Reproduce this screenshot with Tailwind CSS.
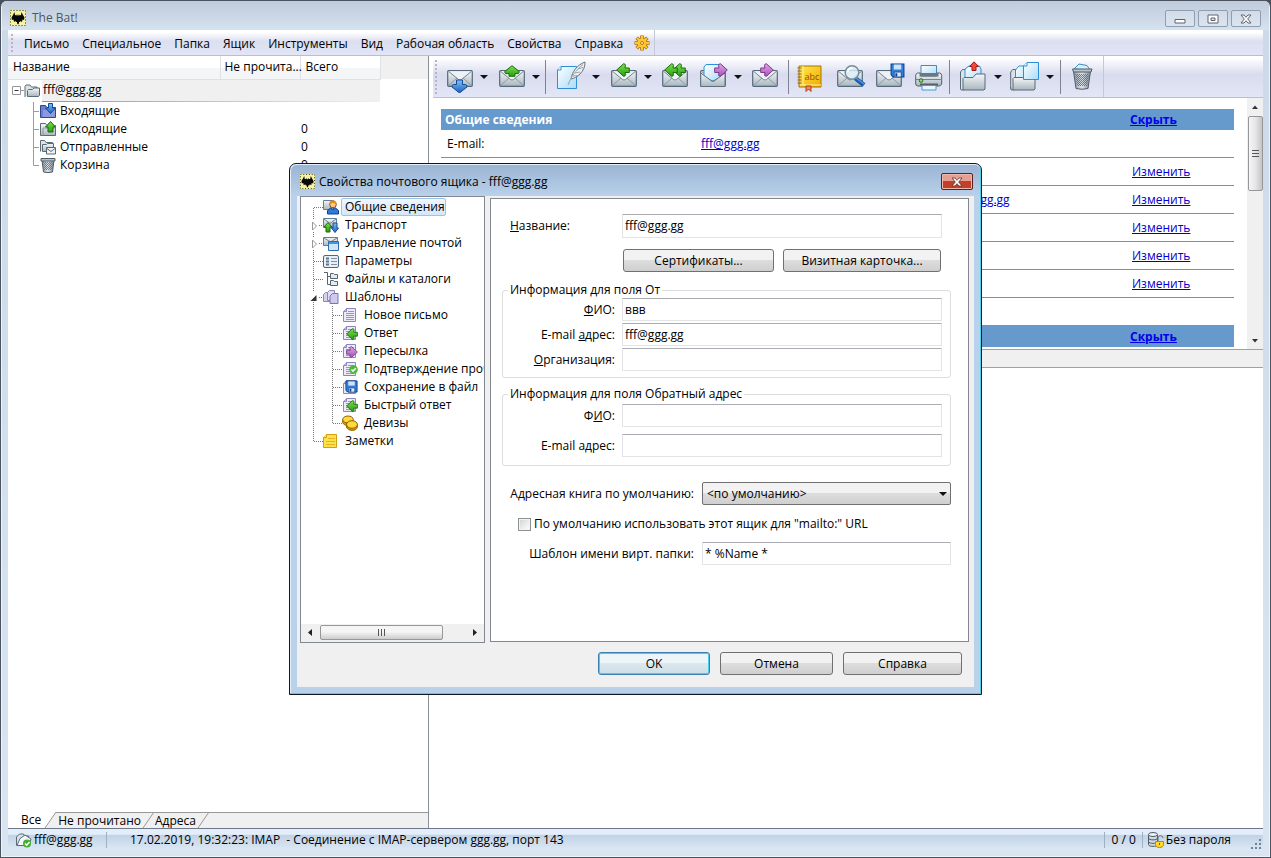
<!DOCTYPE html>
<html lang="ru">
<head>
  <meta charset="UTF-8">
  <meta name="viewport" content="width=device-width, initial-scale=1.0">
  <title>The Bat!</title>
  <script src="https://cdn.jsdelivr.net/npm/@tailwindcss/browser@4"></script>
</head>
<body class="font-['Open_Sans','Noto_Sans',sans-serif] text-[12px] leading-4 text-black bg-[#4a4f5a] overflow-hidden">

  <!-- shared icon shapes -->
  <svg width="0" height="0" class="absolute" aria-hidden="true">
    <defs>
      <linearGradient id="gEnv" x1="0" y1="0" x2="0" y2="1"><stop offset="0" stop-color="#f4f7f8"/><stop offset="1" stop-color="#a9b6bf"/></linearGradient>
      <linearGradient id="gGreen" x1="0" y1="0" x2="0" y2="1"><stop offset="0" stop-color="#7be04a"/><stop offset="1" stop-color="#2a9c14"/></linearGradient>
      <linearGradient id="gBlue" x1="0" y1="0" x2="0" y2="1"><stop offset="0" stop-color="#7fc0f5"/><stop offset="1" stop-color="#1a5fc4"/></linearGradient>
      <linearGradient id="gPink" x1="0" y1="0" x2="0" y2="1"><stop offset="0" stop-color="#e2a4ea"/><stop offset="1" stop-color="#a455b4"/></linearGradient>
      <linearGradient id="gPage" x1="0" y1="0" x2="1" y2="1"><stop offset="0" stop-color="#ffffff"/><stop offset="1" stop-color="#a8dcfa"/></linearGradient>
      <linearGradient id="gBin" x1="0" y1="0" x2="1" y2="0"><stop offset="0" stop-color="#8f9aa5"/><stop offset=".5" stop-color="#dfe5ea"/><stop offset="1" stop-color="#7b8792"/></linearGradient>
      <linearGradient id="gBook" x1="0" y1="0" x2="1" y2="1"><stop offset="0" stop-color="#ffe84a"/><stop offset="1" stop-color="#f2a900"/></linearGradient>
      <pattern id="mesh" width="2" height="2" patternUnits="userSpaceOnUse"><path d="M0 0h1v1h-1zM1 1h1v1h-1z" fill="#5d6a76"/></pattern>
      <symbol id="bat" viewBox="0 0 16 16">
        <path d="M0 0h16v16H0z" fill="#f6f3a0"/>
        <path d="M.5.5h15v15H.5z" fill="none" stroke="#222" stroke-dasharray="1 2"/>
        <path d="M4.500 2 3 5 1.500 7.500 2 10l1.500-.5L4 12l1.500-1 .8 1.500L8 14.500l1.700-2 .8-1.500 1.500 1 .5-2.500 1.500.5.5-2.500L13 5l-1.500-3-.5 3-1.500.5L9 4l-.5 1.500h-1L7 4l-.5 1.500L5 5z" fill="#080808"/>
        <path d="M6 12h1v2H6zM9 12h1v2H9z" fill="#f6f3a0"/>
      </symbol>
      <symbol id="envelope" viewBox="0 0 26 17">
        <rect x=".7" y=".7" width="24.600" height="15.600" rx="1" fill="url(#gEnv)" stroke="#54697a" stroke-width="1.200"/>
        <path d="M1.500 15.500 10 8M24.500 15.500 16 8" stroke="#8b99a3" fill="none"/>
        <path d="M1.500 1.300 11.500 9.500q1.500 1 3 0L24.500 1.300" fill="#eef2f4" stroke="#74838e"/>
      </symbol>
      <symbol id="up" viewBox="0 0 16 12"><path d="M8 .7 15.300 6.500q.2 1.500-1.300 2.200L11 8.500v2.800H5V8.500L2 8.700Q.5 8 .7 6.500z" fill="url(#gGreen)" stroke="#1d6b12"/></symbol>
      <symbol id="left" viewBox="0 0 14 14"><path d="M.7 7 7.500.8q1.700-.2 2 1.500L9 5h4.300v4.500H9l.5 2.300q-.3 1.700-2 1.500z" fill="url(#gGreen)" stroke="#1d6b12"/></symbol>
      <symbol id="right" viewBox="0 0 14 14"><path d="M13.300 7 6.500.8q-1.700-.2-2 1.500L5 5H.7v4.500H5l-.5 2.300q.3 1.700 2 1.500z" fill="url(#gPink)" stroke="#7c3b8c"/></symbol>
      <symbol id="floppy" viewBox="0 0 14 14">
        <path d="M1 1h12v12H3L1 11z" fill="#2f7fdc" stroke="#0d3f8e"/>
        <path d="M3.500 1.500h7V6h-7z" fill="#cfe4fa"/><path d="M4 8.500h6.500V13H4z" fill="#dce9f7" stroke="#0d3f8e" stroke-width=".7"/><path d="M5 9.500h1.800v3H5z" fill="#0d3f8e"/>
      </symbol>
      <symbol id="folder" viewBox="0 0 16 16">
        <path d="M1 14V3.500L2 2h4l1.500 2H13v2" fill="#dbe3e8" stroke="#5a6b78"/>
        <path d="M3.500 13.500V7.500l1-1h4L10 5h5.500v7.500l-1 1z" fill="url(#gEnv)" stroke="#5a6b78"/>
      </symbol>
      <symbol id="doc" viewBox="0 0 16 16">
        <path d="M4.500 1.500h9v13h-12v-10z" fill="#eceaf9" stroke="#8c86bd"/>
        <path d="M4.500 1.500v3h-3" fill="#c9c5e8" stroke="#8c86bd"/>
        <path d="M6 4.500h6M4 6.500h8M4 8.500h8M4 10.500h8M4 12.500h8" stroke="#9a94cb"/>
      </symbol>
      <symbol id="trash" viewBox="0 0 16 16">
        <path d="M2 3h12l-1.500 12q-4.500 1.200-9 0z" fill="url(#gBin)" stroke="#4f5d69"/>
        <path d="M3 5h10l-1 8H4z" fill="url(#mesh)" opacity=".8"/>
        <path d="M1 1.500h14V4H1z" fill="#b4bfc8" stroke="#4f5d69"/>
      </symbol>
      <symbol id="tee" viewBox="0 0 14 18"><path d="M4.500 0v18M5 9.500h9" stroke="#777" stroke-dasharray="1 1" fill="none"/></symbol>
      <symbol id="tee-first" viewBox="0 0 14 18"><path d="M4.500 10v8M5 9.500h9" stroke="#777" stroke-dasharray="1 1" fill="none"/></symbol>
      <symbol id="ell" viewBox="0 0 14 18"><path d="M4.500 0v10M5 9.500h9" stroke="#777" stroke-dasharray="1 1" fill="none"/></symbol>
      <symbol id="bar" viewBox="0 0 19 18"><path d="M4.500 0v18" stroke="#777" stroke-dasharray="1 1" fill="none"/></symbol>
      <symbol id="tee-closed" viewBox="0 0 14 18"><path d="M4.500 0v4M4.500 16v2M10 9.500h4" stroke="#777" stroke-dasharray="1 1" fill="none"/><path d="M3.500 6v8L7.500 10z" fill="#fff" stroke="#999"/></symbol>
      <symbol id="tee-open" viewBox="0 0 14 18"><path d="M4.500 0v4M4.500 14v4M10 9.500h4" stroke="#777" stroke-dasharray="1 1" fill="none"/><path d="M7.500 7v6H1.500z" fill="#333"/></symbol>
      <symbol id="branch" viewBox="0 0 11 18"><path d="M4.500 0v18M5 9.500h5" stroke="#9c9c9c" fill="none"/></symbol>
      <symbol id="branch-end" viewBox="0 0 11 18"><path d="M4.500 0v9.500h5.500" stroke="#9c9c9c" fill="none"/></symbol>
      <symbol id="drop" viewBox="0 0 8 4"><path d="M0 0h8L4 4z" fill="#111"/></symbol>
    </defs>
  </svg>

  <div class="min-h-screen flex flex-col border border-[#4b5260] rounded-t-[7px] px-[7px] pb-[7px] bg-linear-to-b from-[#cbd9e9] to-[#d9e5f1] shadow-[inset_0_0_0_1px_#eef4fa] overflow-hidden">

    <!-- title bar -->
    <header class="flex h-[29px] items-center justify-between -mx-1.5 px-2 bg-linear-to-b from-[#c0cbdb] to-[#d5e2ef]">
      <div class="flex items-center gap-1.5 pt-1">
        <svg class="size-4"><use href="#bat"/></svg>
        <h1 class="text-[#4f565f]">The Bat!</h1>
      </div>
      <div class="flex gap-[3px] pt-1.5">
        <button aria-label="Свернуть" class="flex h-[17px] w-[30px] items-center justify-center rounded-[2px] border border-[#8f9dae] bg-white/20"><svg class="size-3" viewBox="0 0 12 12"><path d="M1 6.500h10v3.500H1z" fill="#fff" stroke="#5b6470"/></svg></button>
        <button aria-label="Развернуть" class="flex h-[17px] w-[30px] items-center justify-center rounded-[2px] border border-[#8f9dae] bg-white/20"><svg class="size-3" viewBox="0 0 12 12"><path d="M1 2h10v8H1z" fill="#fff" stroke="#5b6470"/><path d="M4 5h4v2.500H4z" fill="#d5e0ec" stroke="#5b6470"/></svg></button>
        <button aria-label="Закрыть" class="flex h-[17px] w-[30px] items-center justify-center rounded-[2px] border border-[#8f9dae] bg-white/20"><svg class="size-3" viewBox="0 0 12 12"><path d="M1 2h3l2 2.300L8 2h3L7.700 6 11 10H8L6 7.700 4 10H1l3.300-4z" fill="#fff" stroke="#5b6470"/></svg></button>
      </div>
    </header>

    <!-- menu bar -->
    <nav class="flex h-[26px] items-center border-b border-[#b9bfcd] bg-linear-to-b from-white from-10% via-[#dcdff0] via-45% to-[#e1e5f5] pl-[3px]">
      <span class="h-[18px] border-l-2 border-dotted border-[#b5b5c6]"></span>
      <div class="flex gap-[13px] pl-[11px] pt-0.5">
        <a href="#">Письмо</a>
        <a href="#">Специальное</a>
        <a href="#">Папка</a>
        <a href="#">Ящик</a>
        <a href="#">Инструменты</a>
        <a href="#">Вид</a>
        <a href="#">Рабочая область</a>
        <a href="#">Свойства</a>
        <a href="#">Справка</a>
      </div>
      <button aria-label="Настройка" class="ml-[11px] flex h-full items-center border-r border-[#c3c8d8] pr-1">
        <svg class="size-4" viewBox="0 0 16 16"><g stroke="#a86c08" stroke-width="3.600"><path d="M8 .5v15M.5 8h15M2.700 2.700l10.600 10.600M13.300 2.700 2.700 13.300"/></g><g stroke="#ffc62e" stroke-width="2"><path d="M8 1v14M1 8h14M3 3l10 10M13 3 3 13"/></g><circle cx="8" cy="8" r="4.600" fill="#ffc62e"/><circle cx="8" cy="8" r="1.500" fill="#fff2b0" stroke="#b8780c"/></svg>
      </button>
    </nav>

    <main class="flex grow bg-white">
      <!-- folder tree -->
      <section class="flex w-[421px] shrink-0 flex-col border-r border-[#8b9097]">
        <div class="bg-linear-to-b from-[#f0f0f0] from-[23px] to-white to-[23px]">
          <table class="w-[372px] table-fixed border-collapse text-left">
            <colgroup><col class="w-[212px]"><col class="w-[80px]"><col class="w-[80px]"></colgroup>
            <thead>
              <tr class="h-[23px] bg-linear-to-b from-white from-50% to-[#f4f5f7] to-50%">
                <th class="border-r border-b border-[#dfe1e5] p-0 pl-[5px] font-normal">Название</th>
                <th class="whitespace-nowrap border-r border-b border-[#dfe1e5] p-0 pl-1 font-normal">Не прочита...</th>
                <th class="border-r border-b border-[#dfe1e5] p-0 pl-[5px] font-normal">Всего</th>
              </tr>
            </thead>
            <tbody>
              <tr class="h-[22px]">
                <td colspan="3" class="p-0">
                  <div class="flex h-[22px] items-center pl-1">
                    <svg class="h-[9px] w-3" viewBox="0 0 12 9"><path d="M.5.5h8v8h-8z" fill="#fff" stroke="#969696"/><path d="M2.500 4.500h4" stroke="#334"/><path d="M9 4.500h3" stroke="#999"/></svg>
                    <svg class="size-4"><use href="#folder"/></svg>
                    <div class="ml-[2px] flex h-full grow flex-col justify-between bg-[#f0f0f0]"><span class="pl-px pt-0.5">fff@ggg.gg</span><span class="h-px bg-linear-to-r from-[#5fa5d6] to-[#f0f0f0]"></span></div>
                  </div>
                </td>
              </tr>
              <tr class="h-[18px]">
                <td class="p-0"><div class="flex h-[18px] items-center gap-1 pl-[21px]"><span class="flex items-center"><svg class="h-[18px] w-[11px]"><use href="#branch"/></svg><svg class="size-4" viewBox="0 0 16 16"><path d="M.5 14.500v-12h5L7 4.500h8.500v10z" fill="#6f7fd0" stroke="#34458f"/><path d="M3 7h12v7H3z" fill="#8c9ae0"/><path d="M8.500.5h4V5H15.500l-5 5.500L5.500 5h3z" fill="url(#gBlue)" stroke="#154a95"/></svg></span>Входящие</div></td>
                <td class="p-0"></td><td class="p-0"></td>
              </tr>
              <tr class="h-[18px]">
                <td class="p-0"><div class="flex h-[18px] items-center gap-1 pl-[21px]"><span class="flex items-center"><svg class="h-[18px] w-[11px]"><use href="#branch"/></svg><svg class="size-4" viewBox="0 0 16 16"><path d="M.5 14.500v-12h5L7 4.500h8.500v10z" fill="url(#gEnv)" stroke="#5a6b78"/><path d="M3 14.500V7h12.500" fill="none" stroke="#8896a2"/><path d="M10.500.5 15.500 6H13v5H8V6H5.500z" fill="url(#gGreen)" stroke="#1d6b12"/></svg></span>Исходящие</div></td>
                <td class="p-0"></td><td class="p-0 pl-px">0</td>
              </tr>
              <tr class="h-[18px]">
                <td class="p-0"><div class="flex h-[18px] items-center gap-1 pl-[21px]"><span class="flex items-center"><svg class="h-[18px] w-[11px]"><use href="#branch"/></svg><svg class="size-4" viewBox="0 0 16 16"><path d="M.5 12.500v-11h4L6 3.500h6.500v3" fill="#dbe3e8" stroke="#5a6b78"/><path d="M2.500 12.500v-7h4l1-1h6v8z" fill="url(#gEnv)" stroke="#5a6b78"/><path d="M6.500 8.500h9v6.500h-9z" fill="#eef2f5" stroke="#5a6b78"/><path d="m7 9.500 4 3 4-3" fill="none" stroke="#5a6b78"/></svg></span>Отправленные</div></td>
                <td class="p-0"></td><td class="p-0 pl-px">0</td>
              </tr>
              <tr class="h-[18px]">
                <td class="p-0"><div class="flex h-[18px] items-center gap-1 pl-[21px]"><span class="flex items-center"><svg class="h-[18px] w-[11px]"><use href="#branch-end"/></svg><svg class="size-4"><use href="#trash"/></svg></span>Корзина</div></td>
                <td class="p-0"></td><td class="p-0 pl-px">0</td>
              </tr>
            </tbody>
          </table>
        </div>
        <div class="mt-auto flex h-4 bg-[#f0f0f0]">
          <button class="bg-white pl-[13px]">Все</button>
          <svg class="h-4 w-[17px] shrink-0" viewBox="0 0 17 16"><path d="M0 0h15L4 16H0z" fill="#fff"/><path d="M15 0 4 16M15 .5h2" stroke="#999" fill="none"/></svg>
          <button class="border-t border-[#999] leading-[15px]">Не прочитано</button>
          <svg class="h-4 w-3.5 shrink-0" viewBox="0 0 14 16"><path d="M13 0 2 16M0 .5h14" stroke="#999" fill="none"/></svg>
          <button class="border-t border-[#999] leading-[15px]">Адреса</button>
          <svg class="h-4 w-3.5 shrink-0" viewBox="0 0 14 16"><path d="M13 0 2 16M0 .5h14" stroke="#999" fill="none"/></svg>
          <span class="grow border-t border-[#999]"></span>
        </div>
      </section>

      <section class="flex grow flex-col pl-1">
        <!-- toolbar -->
        <div class="flex h-[42px] items-center border-b border-[#b9bfcd] bg-linear-to-b from-white from-5% via-[#d9dcee] via-45% to-[#e2e6f6] pl-0.5">
          <span class="h-[34px] border-l-2 border-dotted border-[#b5b5c6]"></span>
          <div class="flex gap-1 pl-[7px]">
            <button aria-label="Получить почту" class="flex items-center"><svg class="size-8" viewBox="0 0 32 32"><use href="#envelope" x="3" y="9" width="26" height="17"/><path d="M12.500 19h6v4.500h3q2 .5 1.500 2.500l-7.500 6-7.500-6q-.5-2 1.500-2.500h3z" fill="url(#gBlue)" stroke="#154a95"/></svg><svg class="mx-1 h-1 w-2"><use href="#drop"/></svg></button>
            <button aria-label="Отправить почту" class="flex items-center"><svg class="size-8" viewBox="0 0 32 32"><use href="#envelope" x="3" y="9" width="26" height="17"/><use href="#up" x="8" y="4" width="16" height="12"/></svg><svg class="mx-1 h-1 w-2"><use href="#drop"/></svg></button>
          </div>
          <span class="ml-px mr-2.5 h-[34px] w-px bg-[#7d8391]"></span>
          <div class="flex gap-1">
            <button aria-label="Новое письмо" class="flex items-center"><svg class="size-8" viewBox="0 0 32 32"><path d="M5 5.500h15.500v22H1.500V9z" fill="url(#gPage)" stroke="#2f8fd6"/><path d="M5 5.500V9H1.500" fill="#fff" stroke="#2f8fd6"/><path d="M15 18c1-7 6-14 14-17 .3 4-1.500 8.500-5 12-2.500 2.500-6 4.500-9 5z" fill="#eef1f4" stroke="#68727c"/><path d="M12 24C15 16 20 9 27 3.500M19 12l5-1M17 15l5-.5M22 8l5-1.500" fill="none" stroke="#9aa3ac"/></svg><svg class="mx-1 h-1 w-2"><use href="#drop"/></svg></button>
            <button aria-label="Ответить" class="flex items-center"><svg class="size-8" viewBox="0 0 32 32"><use href="#envelope" x="3" y="9" width="26" height="17"/><use href="#left" x="8" y="2" width="14" height="14"/></svg><svg class="mx-1 h-1 w-2"><use href="#drop"/></svg></button>
            <button aria-label="Ответить всем"><svg class="size-8" viewBox="0 0 32 32"><use href="#envelope" x="2" y="9" width="26" height="17"/><use href="#left" x="12" y="2" width="14" height="14"/><use href="#left" x="4" y="2" width="14" height="14"/></svg></button>
            <button aria-label="Переслать" class="flex items-center pl-0.5"><svg class="size-8" viewBox="0 0 32 32"><use href="#envelope" x="2" y="9" width="26" height="17"/><path d="M8 3.500h15V16l-8 4-9-3V6z" fill="url(#gPage)" stroke="#2f8fd6"/><path d="M2.700 25.500V12l11 8q1 .7 2.500 0L27 12v13.500z" fill="url(#gEnv)" stroke="#5f6f7b"/><use href="#right" x="16" y="2" width="14" height="14"/></svg><svg class="mx-1 h-1 w-2"><use href="#drop"/></svg></button>
            <button aria-label="Перенаправить"><svg class="size-8" viewBox="0 0 32 32"><use href="#envelope" x="2" y="9" width="26" height="17"/><use href="#right" x="10" y="2" width="14" height="14"/></svg></button>
          </div>
          <span class="mx-1.5 h-[34px] w-px bg-[#7d8391]"></span>
          <div class="flex gap-2">
            <button aria-label="Адресная книга"><svg class="size-8" viewBox="0 0 32 32"><path d="M4 5h22v21H4z" fill="url(#gBook)" stroke="#a87400"/><path d="M2.500 7h4M2.500 10h4M2.500 13h4M2.500 16h4M2.500 19h4M2.500 22h4" stroke="#8b6a20"/><path d="M8 5v19M5 24h21" stroke="#fff3a6"/><path d="M11 25h5v5.500L13.500 28 11 30.500z" fill="#f08a50" stroke="#b03c18"/><text x="9.500" y="19" font-size="9" fill="#9a4a00">abc</text></svg></button>
            <button aria-label="Поиск писем"><svg class="size-8" viewBox="0 0 32 32"><use href="#envelope" x="2" y="9" width="26" height="17"/><path d="m20 17 9 7" stroke="#1d5ba8" stroke-width="4.500"/><path d="m21 17 8 6" stroke="#4d9be6" stroke-width="1.500"/><circle cx="17" cy="11.500" r="6.800" fill="#d8eefa" fill-opacity=".8" stroke="#7a8a96" stroke-width="1.500"/><path d="M12.500 11c.5-2.500 2.500-4 5-4" stroke="#fff" stroke-width="1.500" fill="none"/></svg></button>
            <button aria-label="Сохранить"><svg class="size-8" viewBox="0 0 32 32"><use href="#envelope" x="1" y="9" width="26" height="17"/><use href="#floppy" x="15" y="2" width="15" height="15"/></svg></button>
            <button aria-label="Печать"><svg class="h-8 w-7" viewBox="0 0 28 32"><path d="M6 4.500h15.500V14H6z" fill="url(#gPage)" stroke="#4a86b8"/><path d="M.7 14.500q0-2 2-2.500h3v3h16v-3h3q2 .5 2 2.500v8.500q-1 2-3 2H3q-2 0-2.300-2z" fill="url(#gEnv)" stroke="#52606c"/><path d="M4.500 12h19v3.500h-19z" fill="#6b7884"/><path d="M1 18.500h26" stroke="#77838e"/><circle cx="6" cy="19.500" r="1.800" fill="#8be060" stroke="#246b1a"/><path d="M5 22.500h18v2H5z" fill="#55616c"/><path d="M7 24.500h14V29H7z" fill="#e9f6ff" stroke="#4a9bd4"/></svg></button>
          </div>
          <span class="mx-1.5 h-[34px] w-px bg-[#7d8391]"></span>
          <div class="flex gap-1 pl-0.5">
            <button aria-label="Экспорт" class="flex items-center"><svg class="size-8" viewBox="0 0 32 32"><path d="M2.500 27V11l2-2.500h5V14" fill="#dbe3e8" stroke="#5a6b78"/><path d="M11 5h10.500l1.500 3v12H7V8z" fill="url(#gPage)" stroke="#2f8fd6"/><path d="M5 28.500V17.500l1-1h9l3-3.500h9v15l-1 1H5.500z" fill="url(#gEnv)" stroke="#5a6b78"/><path d="M2.500 26v2q0 1 1.500 1h2" fill="none" stroke="#5a6b78"/><path d="M16 .8 20.500 5.500H18v4h-4v-4h-2.500z" fill="#ef4a3e" stroke="#a01612"/></svg><svg class="mx-1 h-1 w-2"><use href="#drop"/></svg></button>
            <button aria-label="Копировать в папку" class="flex items-center"><svg class="size-8" viewBox="0 0 32 32"><path d="M.7 27V11l2-2.500h5V14" fill="#dbe3e8" stroke="#5a6b78"/><path d="M9 5h7v18H5.500V9z" fill="url(#gPage)" stroke="#2f8fd6"/><path d="M.7 26v2q0 1 1.500 1h2M3 28.500V17.500l1-1h21v11.500l-1 1H3.500z" fill="url(#gEnv)" stroke="#5a6b78"/><path d="M17 1.500h11.500v17h-15V5z" fill="url(#gPage)" stroke="#2f8fd6"/><path d="M17 1.500V5h-3.500" fill="#fff" stroke="#2f8fd6"/></svg><svg class="mx-1 h-1 w-2"><use href="#drop"/></svg></button>
          </div>
          <span class="ml-0.5 mr-[5px] h-[34px] w-px bg-[#7d8391]"></span>
          <button aria-label="Удалить" class="pr-[5px]"><svg class="size-8" viewBox="0 0 32 32"><path d="M8 8 13 3l8 1.500L24 9z" fill="#d8effc" stroke="#3a8cc4"/><path d="M7.500 10h17l-2.500 17.500q-6 1.500-12 0z" fill="url(#gBin)" stroke="#4f5d69"/><path d="M9 13h14l-1.800 12H10.800z" fill="url(#mesh)" opacity=".85"/><path d="M6.500 8h19.500l-1 3H7.500z" fill="#b9c4cc" stroke="#4f5d69"/></svg></button>
          <span class="h-full w-px bg-[#c3c8d8]"></span>
        </div>

        <!-- account summary -->
        <div class="flex h-[251px]">
          <div class="grow overflow-hidden pl-2 pr-[13px] pt-[11px]">
            <table class="w-full table-fixed border-collapse text-left">
              <colgroup><col class="w-[254px]"><col><col class="w-[108px]"></colgroup>
              <tbody>
                <tr class="h-[21px] bg-[#6699cc]"><th colspan="2" class="p-0 px-1 font-bold text-white">Общие сведения</th><td class="p-0 px-1 font-bold"><a href="#" class="text-[#0000ee] underline">Скрыть</a></td></tr>
                <tr class="h-[27px] border-b border-[#7193b5]"><td class="p-0 px-1.5 pt-0.5">E-mail:</td><td class="p-0 px-1.5 pt-0.5"><a href="#" class="text-[#0000cc] underline">fff@ggg.gg</a></td><td></td></tr>
                <tr class="h-7 border-b border-[#7193b5]"><td></td><td></td><td class="p-0 px-1.5 pt-0.5"><a href="#" class="text-[#0000cc] underline">Изменить</a></td></tr>
                <tr class="h-7 border-b border-[#7193b5]"><td></td><td class="p-0 pl-64 pt-0.5"><a href="#" class="text-[#0000cc] underline">fff@ggg.gg</a></td><td class="p-0 px-1.5 pt-0.5"><a href="#" class="text-[#0000cc] underline">Изменить</a></td></tr>
                <tr class="h-7 border-b border-[#7193b5]"><td></td><td></td><td class="p-0 px-1.5 pt-0.5"><a href="#" class="text-[#0000cc] underline">Изменить</a></td></tr>
                <tr class="h-7 border-b border-[#7193b5]"><td></td><td></td><td class="p-0 px-1.5 pt-0.5"><a href="#" class="text-[#0000cc] underline">Изменить</a></td></tr>
                <tr class="h-7 border-b border-[#7193b5]"><td></td><td></td><td class="p-0 px-1.5 pt-0.5"><a href="#" class="text-[#0000cc] underline">Изменить</a></td></tr>
                <tr class="h-7"><td colspan="3"></td></tr>
                <tr class="h-[22px] bg-[#6699cc]"><td colspan="2"></td><td class="p-0 px-1 pt-0.5 font-bold"><a href="#" class="text-[#0000ee] underline">Скрыть</a></td></tr>
              </tbody>
            </table>
          </div>
          <div class="flex w-4 shrink-0 flex-col items-center bg-[#f0f0f0]">
            <svg class="h-[18px] w-2 shrink-0" viewBox="0 0 8 18"><path d="M1 11h6L4 7.500z" fill="#333"/></svg>
            <div class="flex h-[75px] w-[15px] flex-col items-center justify-center gap-0.5 rounded-[2px] border border-[#979797] bg-linear-to-r from-[#f5f5f5] via-[#e6e6e8] to-[#c4c4c8]">
              <span class="h-px w-[7px] bg-[#555]"></span><span class="h-px w-[7px] bg-[#555]"></span><span class="h-px w-[7px] bg-[#555]"></span>
            </div>
            <svg class="mt-auto h-[18px] w-2 shrink-0" viewBox="0 0 8 18"><path d="M1 8h6L4 11.500z" fill="#333"/></svg>
          </div>
        </div>
        <div class="h-[19px] border-y border-[#a0a0a0] bg-[#f0f0f0]"></div>
      </section>
    </main>

    <!-- status bar -->
    <footer class="flex h-[22px] items-center border-t border-[#6d7988] bg-linear-to-b from-[#e3eefa] from-25% via-[#c1d3e6] via-30% to-[#dce8f4]">
      <div class="flex w-[99px] items-center gap-0.5 border-r border-[#9fb0c2] pl-2">
        <svg class="size-4" viewBox="0 0 16 16"><path d="M.5 13.500V5l3-3h4l1 2h4v3" fill="#dbe3e8" stroke="#5a6b78"/><path d="m1 13.500 3-7 5-3.500 6 4-2 6.500z" fill="#f5f8fa" stroke="#5a6b78"/><circle cx="11" cy="11.500" r="4" fill="#44b030"/><path d="m9 11.500 1.700 1.700L13.500 10" stroke="#fff" stroke-width="1.500" fill="none"/></svg>
        <span>fff@ggg.gg</span>
      </div>
      <p class="grow whitespace-pre pl-[23px]">17.02.2019, 19:32:23: IMAP  - Соединение с IMAP-сервером ggg.gg, порт 143</p>
      <span class="border-l border-[#9fb0c2] px-1.5">0 / 0</span>
      <div class="flex items-center gap-0.5 border-l border-[#9fb0c2] pl-[5px]">
        <svg class="size-4" viewBox="0 0 16 16"><path d="M.5 2.500v10c0 2.500 9 2.500 9 0v-10" fill="#cfd9e1" stroke="#4d5c68"/><ellipse cx="5" cy="2.500" rx="4.500" ry="2" fill="#eef3f7" stroke="#4d5c68"/><path d="M.5 6c0 2.500 9 2.500 9 0M.5 9.500c0 2.500 9 2.500 9 0" fill="none" stroke="#4d5c68"/><path d="M10 9V6c0-3 5-3 5 0" fill="none" stroke="#667"/><path d="M7.500 9.500h8v3c0 4-8 4-8 0z" fill="#ffd92e" stroke="#b08a00"/><path d="M11.500 11v2" stroke="#7a5c00"/></svg>
        <span>Без пароля</span>
      </div>
      <svg class="ml-[19px] mr-px mt-2 size-3" viewBox="0 0 12 12"><path d="M9 1h2v2H9zM5 5h2v2H5zM9 5h2v2H9zM1 9h2v2H1zM5 9h2v2H5zM9 9h2v2H9z" fill="#6f8296"/></svg>
    </footer>
  </div>

  <!-- account properties dialog -->
  <div role="dialog" aria-labelledby="dlgTitle" class="absolute left-[289px] top-[163px] w-[693px] rounded-t-[7px] border border-[#0b1a26] bg-[#b9d1ea] px-[7px] pb-[7px] shadow-[inset_-1px_-1px_0_#4fd0e8,inset_1px_1px_0_#e3eefa]">
    <div class="-mx-1.5 mt-px flex h-[31px] items-center justify-between rounded-t-[6px] bg-linear-to-b from-[#9ab4d3] to-[#b9d1ea] pl-[9px] pr-[7px]">
      <div class="flex items-center gap-1 pt-0.5">
        <svg class="size-[15px]"><use href="#bat"/></svg>
        <h2 id="dlgTitle">Свойства почтового ящика - fff@ggg.gg</h2>
      </div>
      <button aria-label="Закрыть" class="mt-0.5 flex h-[17px] w-8 items-center justify-center rounded-[2px] border border-[#5b2020] bg-linear-to-b from-[#e5a091] from-45% to-[#c2402a] to-50% shadow-[inset_0_0_0_1px_#f0b8ac]"><svg class="size-3" viewBox="0 0 12 12"><path d="M1 2h3l2 2.300L8 2h3L7.700 6 11 10H8L6 7.700 4 10H1l3.300-4z" fill="#fff" stroke="#5c3030" stroke-width=".8"/></svg></button>
    </div>

    <div class="bg-[#f0f0f0] pb-3 pl-[3px] pr-[5px]">
      <div class="flex h-[447px] gap-[5px]">
        <!-- sections -->
        <div class="flex w-[185px] shrink-0 flex-col justify-between overflow-hidden border border-[#828790] bg-white">
          <ul class="whitespace-nowrap pl-2 pt-px">
            <li class="flex h-[18px] items-center"><svg class="h-[18px] w-[14px] shrink-0"><use href="#tee-first"/></svg>
              <svg class="size-4 shrink-0" viewBox="0 0 16 16"><path d="M.5 1.500h10v9H.500z" fill="url(#gEnv)" stroke="#5f7f9b"/><circle cx="10" cy="5.500" r="3.300" fill="#ffc98a" stroke="#8a4a10"/><path d="M6.500 5c0-5 7-5 7 0-2-1.500-5-1.500-7 0z" fill="#e58a1a"/><path d="M4.500 15v-3.500l3-2.500 2.500 1.500L12.500 9l3 2.500V15z" fill="#2a7ae0" stroke="#123f8a"/></svg>
              <a href="#" class="-my-px ml-[2px] rounded-[2px] border border-[#9cc4ea] bg-linear-to-b from-[#f0f7fe] to-[#d3e7fb] pl-[3px]">Общие сведения</a></li>
            <li class="flex h-[18px] items-center"><svg class="h-[18px] w-[14px] shrink-0"><use href="#tee-closed"/></svg>
              <svg class="size-4 shrink-0" viewBox="0 0 16 16"><path d="M.5 1.500h13v9H.500z" fill="url(#gEnv)" stroke="#5f7f9b"/><path d="m1 2 6 4.500L13 2" fill="none" stroke="#6f808d"/><path d="M5 5.500 9 10H7v5H3v-5H1z" fill="url(#gGreen)" stroke="#1d6b12"/><path d="M12 15.500 8.500 11H10V6h4v5h1.500z" fill="url(#gBlue)" stroke="#154a95"/></svg>
              <a href="#" class="pl-1.5">Транспорт</a></li>
            <li class="flex h-[18px] items-center"><svg class="h-[18px] w-[14px] shrink-0"><use href="#tee-closed"/></svg>
              <svg class="size-4 shrink-0" viewBox="0 0 16 16"><path d="M.5 2.500h14v8H.500z" fill="url(#gEnv)" stroke="#5f7f9b"/><path d="m1 3 6.500 4L14 3" fill="none" stroke="#6f808d"/><path d="M5.500 6.500h10v9h-10z" fill="#cfe6f8" stroke="#2d6ea8"/><path d="M6 7h9v2H6z" fill="#4c94d6"/></svg>
              <a href="#" class="pl-1.5">Управление почтой</a></li>
            <li class="flex h-[18px] items-center"><svg class="h-[18px] w-[14px] shrink-0"><use href="#tee"/></svg>
              <svg class="size-4 shrink-0" viewBox="0 0 16 16"><rect x=".5" y="2.500" width="15" height="12" rx="1.500" fill="#e9eff4" stroke="#4f687c"/><path d="M8 5.500h6M8 8.500h6M8 11.500h6" stroke="#7d93a4"/><path d="M3 4.500h3v2H3zM3 7.500h3v2H3zM3 10.500h3v2H3z" fill="#557894"/></svg>
              <a href="#" class="pl-1.5">Параметры</a></li>
            <li class="flex h-[18px] items-center"><svg class="h-[18px] w-[14px] shrink-0"><use href="#tee"/></svg>
              <svg class="size-4 shrink-0" viewBox="0 0 16 16"><path d="M1 1.500h3.500v12H8M4.500 5.500H8" fill="none" stroke="#56646f"/><path d="M7.500 2.500h3l1 1h3v4h-7zM7.500 9.500h3l1 1h3v4h-7z" fill="#e3e9ed" stroke="#56646f"/></svg>
              <a href="#" class="pl-1.5">Файлы и каталоги</a></li>
            <li><div class="flex h-[18px] items-center"><svg class="h-[18px] w-[14px] shrink-0"><use href="#tee-open"/></svg>
              <svg class="size-4 shrink-0" viewBox="0 0 16 16"><path d="M2.500 3.500h6v9H.500v-7z" fill="#d6d2ee" stroke="#8c86bd"/><path d="M6.500 1.500h5v10h-7v-8z" fill="#e1def4" stroke="#8c86bd"/><path d="M9.500 4.500h5.500v10H7v-7.500z" fill="#cfcaec" stroke="#7a74b0"/></svg>
              <a href="#" class="pl-1.5">Шаблоны</a></div>
              <ul>
                <li class="flex h-[18px] items-center"><svg class="h-[18px] w-[19px] shrink-0"><use href="#bar"/></svg><svg class="h-[18px] w-[14px] shrink-0"><use href="#tee"/></svg><svg class="size-4 shrink-0"><use href="#doc"/></svg><a href="#" class="pl-1.5">Новое письмо</a></li>
                <li class="flex h-[18px] items-center"><svg class="h-[18px] w-[19px] shrink-0"><use href="#bar"/></svg><svg class="h-[18px] w-[14px] shrink-0"><use href="#tee"/></svg><svg class="size-4 shrink-0" viewBox="0 0 16 16"><use href="#doc" width="16" height="16"/><use href="#left" x="4" y="3" width="12" height="12"/></svg><a href="#" class="pl-1.5">Ответ</a></li>
                <li class="flex h-[18px] items-center"><svg class="h-[18px] w-[19px] shrink-0"><use href="#bar"/></svg><svg class="h-[18px] w-[14px] shrink-0"><use href="#tee"/></svg><svg class="size-4 shrink-0" viewBox="0 0 16 16"><use href="#doc" width="16" height="16"/><use href="#right" x="4" y="3" width="12" height="12"/></svg><a href="#" class="pl-1.5">Пересылка</a></li>
                <li class="flex h-[18px] items-center"><svg class="h-[18px] w-[19px] shrink-0"><use href="#bar"/></svg><svg class="h-[18px] w-[14px] shrink-0"><use href="#tee"/></svg><svg class="size-4 shrink-0" viewBox="0 0 16 16"><use href="#doc" width="16" height="16"/><circle cx="11.500" cy="8.500" r="4.300" fill="#4cb83a"/><path d="m9.500 8.500 1.500 1.700 2.800-3" stroke="#fff" stroke-width="1.500" fill="none"/></svg><a href="#" class="pl-1.5">Подтверждение проч</a></li>
                <li class="flex h-[18px] items-center"><svg class="h-[18px] w-[19px] shrink-0"><use href="#bar"/></svg><svg class="h-[18px] w-[14px] shrink-0"><use href="#tee"/></svg><svg class="size-4 shrink-0" viewBox="0 0 16 16"><use href="#doc" width="16" height="16"/><use href="#floppy" x="3" y="1" width="13" height="13"/></svg><a href="#" class="pl-1.5">Сохранение в файл</a></li>
                <li class="flex h-[18px] items-center"><svg class="h-[18px] w-[19px] shrink-0"><use href="#bar"/></svg><svg class="h-[18px] w-[14px] shrink-0"><use href="#tee"/></svg><svg class="size-4 shrink-0" viewBox="0 0 16 16"><use href="#doc" width="16" height="16"/><use href="#left" x="4" y="3" width="12" height="12"/></svg><a href="#" class="pl-1.5">Быстрый ответ</a></li>
                <li class="flex h-[18px] items-center"><svg class="h-[18px] w-[19px] shrink-0"><use href="#bar"/></svg><svg class="h-[18px] w-[14px] shrink-0"><use href="#ell"/></svg><svg class="size-4 shrink-0" viewBox="0 0 16 16"><path d="M.7 4.500v3c1 4 10 4 10 0v-3z" fill="#d99a00" stroke="#8c6200"/><ellipse cx="6" cy="4.500" rx="5.300" ry="3.500" fill="#ffd83a" stroke="#8c6200"/><path d="M4.500 9.500V12c1 4.500 10.500 4.500 10.800 0V9.500z" fill="#d99a00" stroke="#8c6200"/><ellipse cx="10" cy="9.500" rx="5.400" ry="3.800" fill="#ffd83a" stroke="#8c6200"/></svg><a href="#" class="pl-1.5">Девизы</a></li>
              </ul>
            </li>
            <li class="flex h-[18px] items-center"><svg class="h-[18px] w-[14px] shrink-0"><use href="#ell"/></svg>
              <svg class="size-4 shrink-0" viewBox="0 0 16 16"><path d="M3.500 1.500h10v13H.500v-10z" fill="#ffe24a" stroke="#d0a010"/><path d="M3.500 1.500v3h-3" fill="#fff3a0" stroke="#d0a010"/><path d="M5 5.500h7M3 8.500h9M3 11.500h9" stroke="#e2b420"/></svg>
              <a href="#" class="pl-1.5">Заметки</a></li>
          </ul>
          <div class="flex h-[18px] items-center justify-between bg-[#f0f0f0] px-[7px] pb-px">
            <div class="flex items-center gap-2">
              <svg class="h-[7px] w-1" viewBox="0 0 4 7"><path d="M4 0v7L0 3.500z" fill="#222"/></svg>
              <div class="flex h-[15px] w-[123px] items-center justify-center gap-0.5 rounded-[2px] border border-[#979797] bg-linear-to-b from-[#f5f5f5] from-45% to-[#cdcdcd]">
                <span class="h-[7px] w-px bg-[#555]"></span><span class="h-[7px] w-px bg-[#555]"></span><span class="h-[7px] w-px bg-[#555]"></span>
              </div>
            </div>
            <svg class="h-[7px] w-1" viewBox="0 0 4 7"><path d="M0 0v7l4-3.500z" fill="#222"/></svg>
          </div>
        </div>

        <!-- general settings -->
        <form class="mb-px mt-0.5 grow border border-[#828790] bg-white pl-[11px] pr-[17px] pt-[15px]">
          <div class="flex items-center pr-[9px]">
            <label for="boxName" class="w-[120px] pl-2"><u>Н</u>азвание:</label>
            <input id="boxName" type="text" value="fff@ggg.gg" class="h-6 grow border border-[#e3e3e8] border-t-[#abadb3] px-0.5 pb-px">
          </div>
          <div class="mt-[11px] flex gap-[9px] pl-[121px] pr-2.5">
            <button type="button" class="h-[23px] w-[151px] rounded-[3px] border border-[#707070] bg-linear-to-b from-[#f2f2f2] from-45% via-[#dddddd] via-50% to-[#cfcfcf]">Сертификаты...</button>
            <button type="button" class="h-[23px] grow rounded-[3px] border border-[#707070] bg-linear-to-b from-[#f2f2f2] from-45% via-[#dddddd] via-50% to-[#cfcfcf]">Визитная карточка...</button>
          </div>

          <fieldset class="mt-2.5 rounded-[3px] border border-[#dcdcdc] pb-1.5 pr-2">
            <legend class="ml-[5px] px-0.5">Информация для поля От</legend>
            <div class="flex flex-col gap-0.5">
              <div class="flex items-center gap-[7px]"><label for="fromName" class="w-28 text-right"><u>Ф</u>ИО:</label><input id="fromName" type="text" value="ввв" class="h-[23px] grow border border-[#e3e3e8] border-t-[#abadb3] px-0.5 pb-px"></div>
              <div class="flex items-center gap-[7px]"><label for="fromMail" class="w-28 text-right">E-mail <u>а</u>дрес:</label><input id="fromMail" type="text" value="fff@ggg.gg" class="h-[23px] grow border border-[#e3e3e8] border-t-[#abadb3] px-0.5 pb-px"></div>
              <div class="flex items-center gap-[7px]"><label for="fromOrg" class="w-28 text-right"><u>О</u>рганизация:</label><input id="fromOrg" type="text" class="h-[23px] grow border border-[#e3e3e8] border-t-[#abadb3] px-0.5 pb-px"></div>
            </div>
          </fieldset>

          <fieldset class="mt-2 rounded-[3px] border border-[#dcdcdc] pb-2 pr-2 pt-0.5">
            <legend class="ml-[5px] px-0.5">Информация для поля Обратный адрес</legend>
            <div class="flex flex-col gap-[7px]">
              <div class="flex items-center gap-[7px]"><label for="replyName" class="w-28 text-right">Ф<u>И</u>О:</label><input id="replyName" type="text" class="h-[23px] grow border border-[#e3e3e8] border-t-[#abadb3] px-0.5 pb-px"></div>
              <div class="flex items-center gap-[7px]"><label for="replyMail" class="w-28 text-right">E-mail а<u>д</u>рес:</label><input id="replyMail" type="text" class="h-[23px] grow border border-[#e3e3e8] border-t-[#abadb3] px-0.5 pb-px"></div>
            </div>
          </fieldset>

          <div class="mt-4 flex items-center gap-2">
            <label for="addrBook" class="w-48 shrink-0 text-right">Адресная книга по умолчанию:</label>
            <div class="relative grow">
              <select id="addrBook" class="h-[23px] w-full appearance-none rounded-[2px] border border-[#707070] bg-linear-to-b from-[#f2f2f2] from-45% via-[#dddddd] via-50% to-[#cfcfcf] pl-1"><option>&lt;по умолчанию&gt;</option></select>
              <svg class="pointer-events-none absolute right-1 top-2.5 h-1 w-2"><use href="#drop"/></svg>
            </div>
          </div>
          <div class="mt-3 flex h-[14px] items-center gap-[3px] pl-4">
            <input id="mailto" type="checkbox" class="size-[13px] appearance-none border border-[#8e8f8f] bg-linear-to-br from-[#cfd3d6] to-white shadow-[inset_0_0_0_1px_#f4f4f4]">
            <label for="mailto">По умолчанию использовать этот ящик для "mailto:" URL</label>
          </div>
          <div class="mt-[11px] flex items-center gap-2">
            <label for="virt" class="w-48 shrink-0 text-right">Шаблон имени вирт. папки:</label>
            <input id="virt" type="text" value="* %Name *" class="h-[23px] grow border border-[#e3e3e8] border-t-[#abadb3] px-0.5 pb-px">
          </div>
        </form>
      </div>

      <div class="mt-[9px] flex justify-end gap-2.5 pr-[7px]">
        <button class="h-[23px] w-28 rounded-[3px] border border-[#3c7fb1] bg-linear-to-b from-[#eef5f8] from-45% via-[#dbe8ee] via-50% to-[#cddfe7] shadow-[inset_0_0_0_1px_#48cdf0]">OK</button>
        <button class="h-[23px] w-[113px] rounded-[3px] border border-[#707070] bg-linear-to-b from-[#f2f2f2] from-45% via-[#dddddd] via-50% to-[#cfcfcf]">Отмена</button>
        <button class="h-[23px] w-[119px] rounded-[3px] border border-[#707070] bg-linear-to-b from-[#f2f2f2] from-45% via-[#dddddd] via-50% to-[#cfcfcf]">Справка</button>
      </div>
    </div>
  </div>
</body>
</html>
